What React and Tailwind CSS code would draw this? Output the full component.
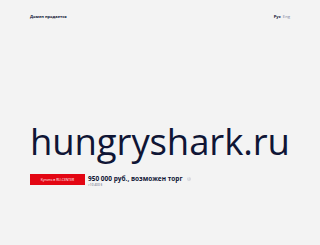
export default function App() {
  return (
    <div className="w-[320px] h-[245px] bg-[#f3f3f3] text-[#0f1535] relative overflow-hidden" style={{ fontFamily: '"Open Sans", sans-serif' }}>
      <div className="h-[19px] flex justify-between items-end px-[30px]">
        <div className="text-[4px] font-bold leading-none">Домен продается</div>
        <div className="flex gap-[2px] text-[4.2px] leading-none">
          <span className="font-bold">Рус</span>
          <span className="text-[#7a8199]">Eng</span>
        </div>
      </div>
      <div className="pl-[30px] pt-[102px] text-[36.5px] leading-[40px] tracking-[-0.1px]">hungryshark.ru</div>
      <div className="flex items-start pl-[30px] pt-[13px] gap-[3px]">
        <div className="w-[55px] h-[11px] bg-[#e30613] text-white text-[3.4px] flex items-center justify-center">Купить в RU-CENTER</div>
        <div className="flex flex-col pt-[1px]">
          <div className="flex items-center gap-[4px]">
            <span className="text-[6.5px] font-bold leading-[8px]">950 000 руб., возможен торг</span>
            <span className="w-[4px] h-[4px] rounded-full bg-[#d7d9df] text-[3px] flex items-center justify-center text-white">?</span>
          </div>
          <div className="text-[3.2px] text-[#555a70] leading-none mt-[1px]">≈10 400 $</div>
        </div>
      </div>
    </div>
  );
}
